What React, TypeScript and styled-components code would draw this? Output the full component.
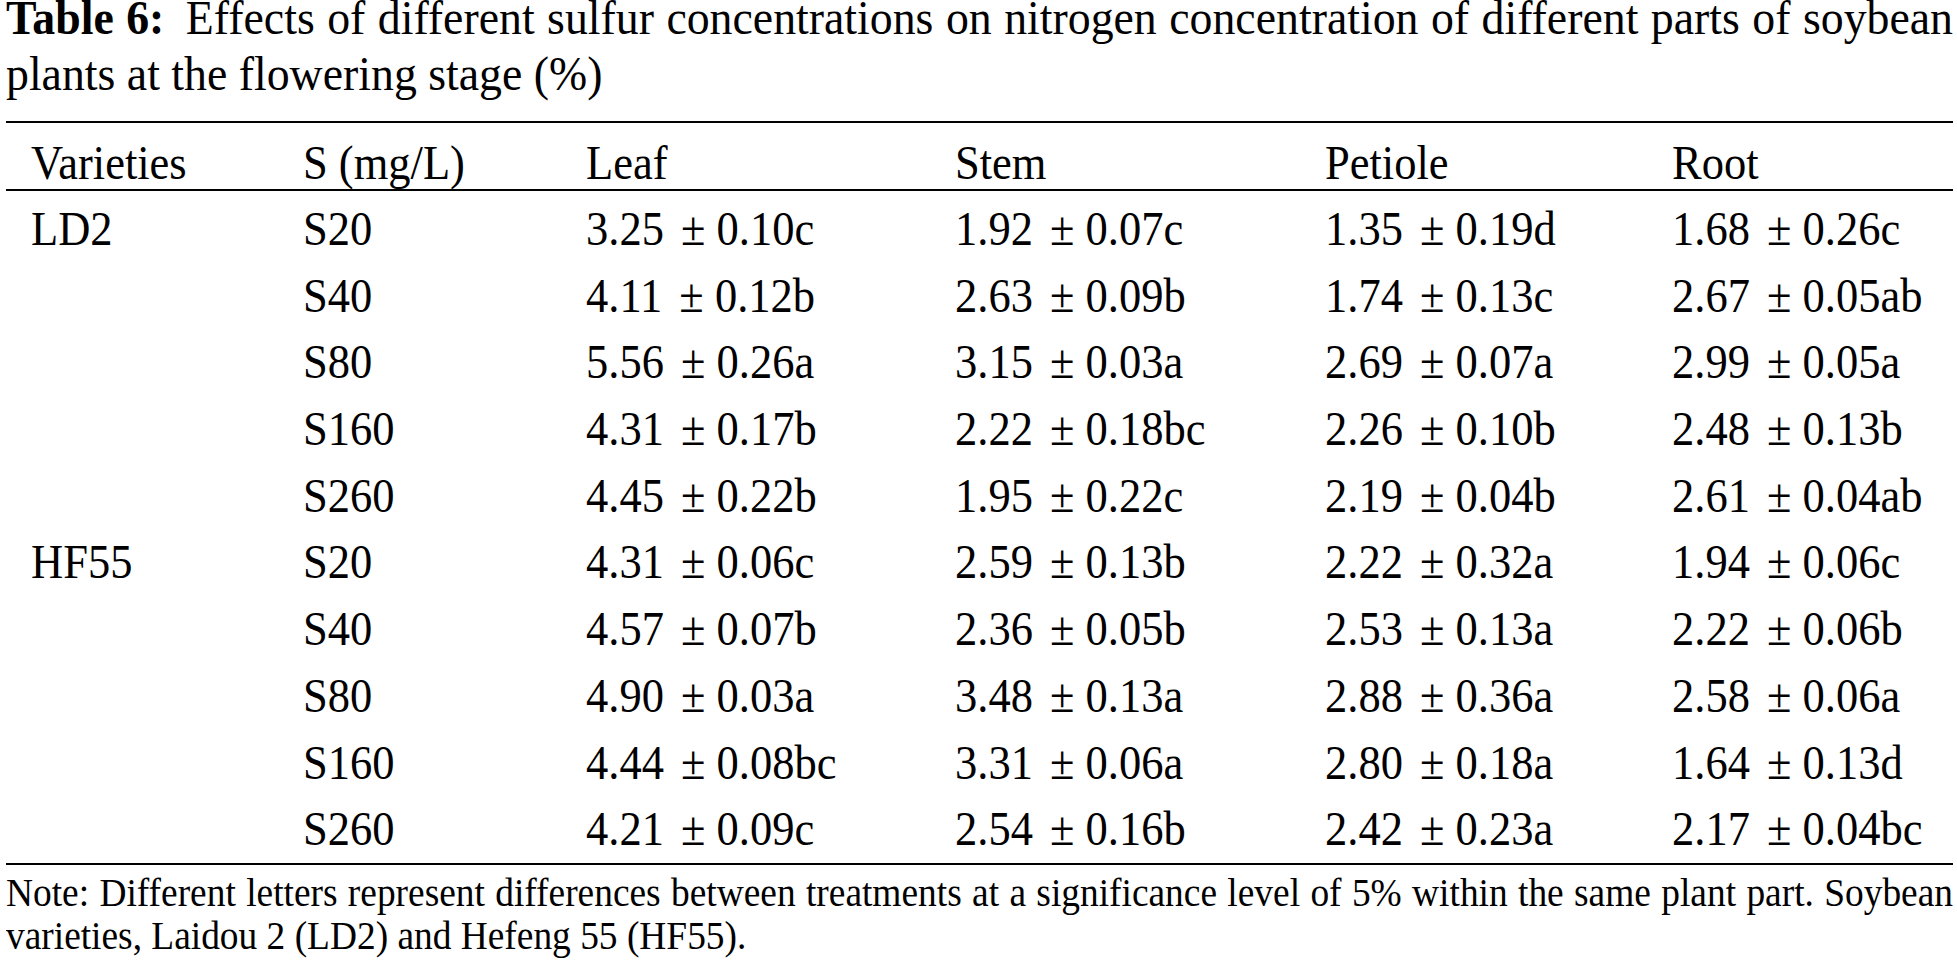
import React from "react";
import styled, { createGlobalStyle } from "styled-components";

const GlobalStyle = createGlobalStyle`
  html, body {
    margin: 0;
    padding: 0;
    background: #ffffff;
  }
  body {
    font-family: "Liberation Serif", "Times New Roman", serif;
    color: #000000;
    overflow: hidden;
  }
`;

const STRETCH = 1.08;

const Page = styled.div`
  padding: 0 4px 0 6px;
  width: 1957px;
  height: 966px;
  box-sizing: border-box;
  overflow: hidden;
`;

const Caption = styled.p`
  margin: -10px 0 0 0;
  font-size: 45.8px;
  line-height: 52px;
  text-align: justify;
  transform: scaleY(${STRETCH});
  transform-origin: top left;
`;

const Label = styled.strong`
  font-weight: 700;
  margin-right: 9px;
`;

const Table = styled.div`
  margin-top: 27px;
  border-top: 2px solid #000;
  border-bottom: 2px solid #000;
  font-size: 44.5px;
`;

const COLS = "272px 283px 369px 370px 347px 1fr";

const HeadRow = styled.div`
  display: grid;
  grid-template-columns: ${COLS};
  padding: 14px 0 0 25px;
  line-height: 52px;
  border-bottom: 2px solid #000;
`;

const Body = styled.div`
  padding: 5px 0 0 0;
`;

const Row = styled.div`
  display: grid;
  grid-template-columns: ${COLS};
  padding-left: 25px;
  height: 66.7px;
  line-height: 66.7px;
`;

const Cell = styled.span`
  display: inline-block;
  white-space: nowrap;
  transform: scaleY(${STRETCH});
  transform-origin: center;
`;

const Pm = styled.span`
  margin-left: 6px;
`;

const Note = styled.p`
  margin: 8px 0 0 0;
  font-size: 37.4px;
  line-height: 38.9px;
  text-align: justify;
  transform: scaleY(${STRETCH});
  transform-origin: top left;
`;

type DataRow = {
  variety?: string;
  s: string;
  values: string[];
};

const rows: DataRow[] = [
  { variety: "LD2", s: "S20", values: ["3.25|0.10c", "1.92|0.07c", "1.35|0.19d", "1.68|0.26c"] },
  { s: "S40", values: ["4.11|0.12b", "2.63|0.09b", "1.74|0.13c", "2.67|0.05ab"] },
  { s: "S80", values: ["5.56|0.26a", "3.15|0.03a", "2.69|0.07a", "2.99|0.05a"] },
  { s: "S160", values: ["4.31|0.17b", "2.22|0.18bc", "2.26|0.10b", "2.48|0.13b"] },
  { s: "S260", values: ["4.45|0.22b", "1.95|0.22c", "2.19|0.04b", "2.61|0.04ab"] },
  { variety: "HF55", s: "S20", values: ["4.31|0.06c", "2.59|0.13b", "2.22|0.32a", "1.94|0.06c"] },
  { s: "S40", values: ["4.57|0.07b", "2.36|0.05b", "2.53|0.13a", "2.22|0.06b"] },
  { s: "S80", values: ["4.90|0.03a", "3.48|0.13a", "2.88|0.36a", "2.58|0.06a"] },
  { s: "S160", values: ["4.44|0.08bc", "3.31|0.06a", "2.80|0.18a", "1.64|0.13d"] },
  { s: "S260", values: ["4.21|0.09c", "2.54|0.16b", "2.42|0.23a", "2.17|0.04bc"] },
];

const headers = ["Varieties", "S (mg/L)", "Leaf", "Stem", "Petiole", "Root"];

function Value({ v }: { v: string }) {
  const [mean, sd] = v.split("|");
  return (
    <Cell>
      {mean}{" "}
      <Pm>±</Pm>{" "}
      {sd}
    </Cell>
  );
}

export default function App() {
  return (
    <>
      <GlobalStyle />
      <Page>
        <Caption>
          <Label>Table 6:</Label> Effects of different sulfur concentrations on nitrogen
          concentration of different parts of soybean plants at the flowering stage (%)
        </Caption>
        <Table>
          <HeadRow>
            {headers.map((h) => (
              <Cell key={h}>{h}</Cell>
            ))}
          </HeadRow>
          <Body>
            {rows.map((r, i) => (
              <Row key={i}>
                <Cell>{r.variety ?? ""}</Cell>
                <Cell>{r.s}</Cell>
                {r.values.map((v, j) => (
                  <Value key={j} v={v} />
                ))}
              </Row>
            ))}
          </Body>
        </Table>
        <Note>
          Note: Different letters represent differences between treatments at a significance
          level of 5% within the same plant part. Soybean varieties, Laidou 2 (LD2) and Hefeng
          55 (HF55).
        </Note>
      </Page>
    </>
  );
}
